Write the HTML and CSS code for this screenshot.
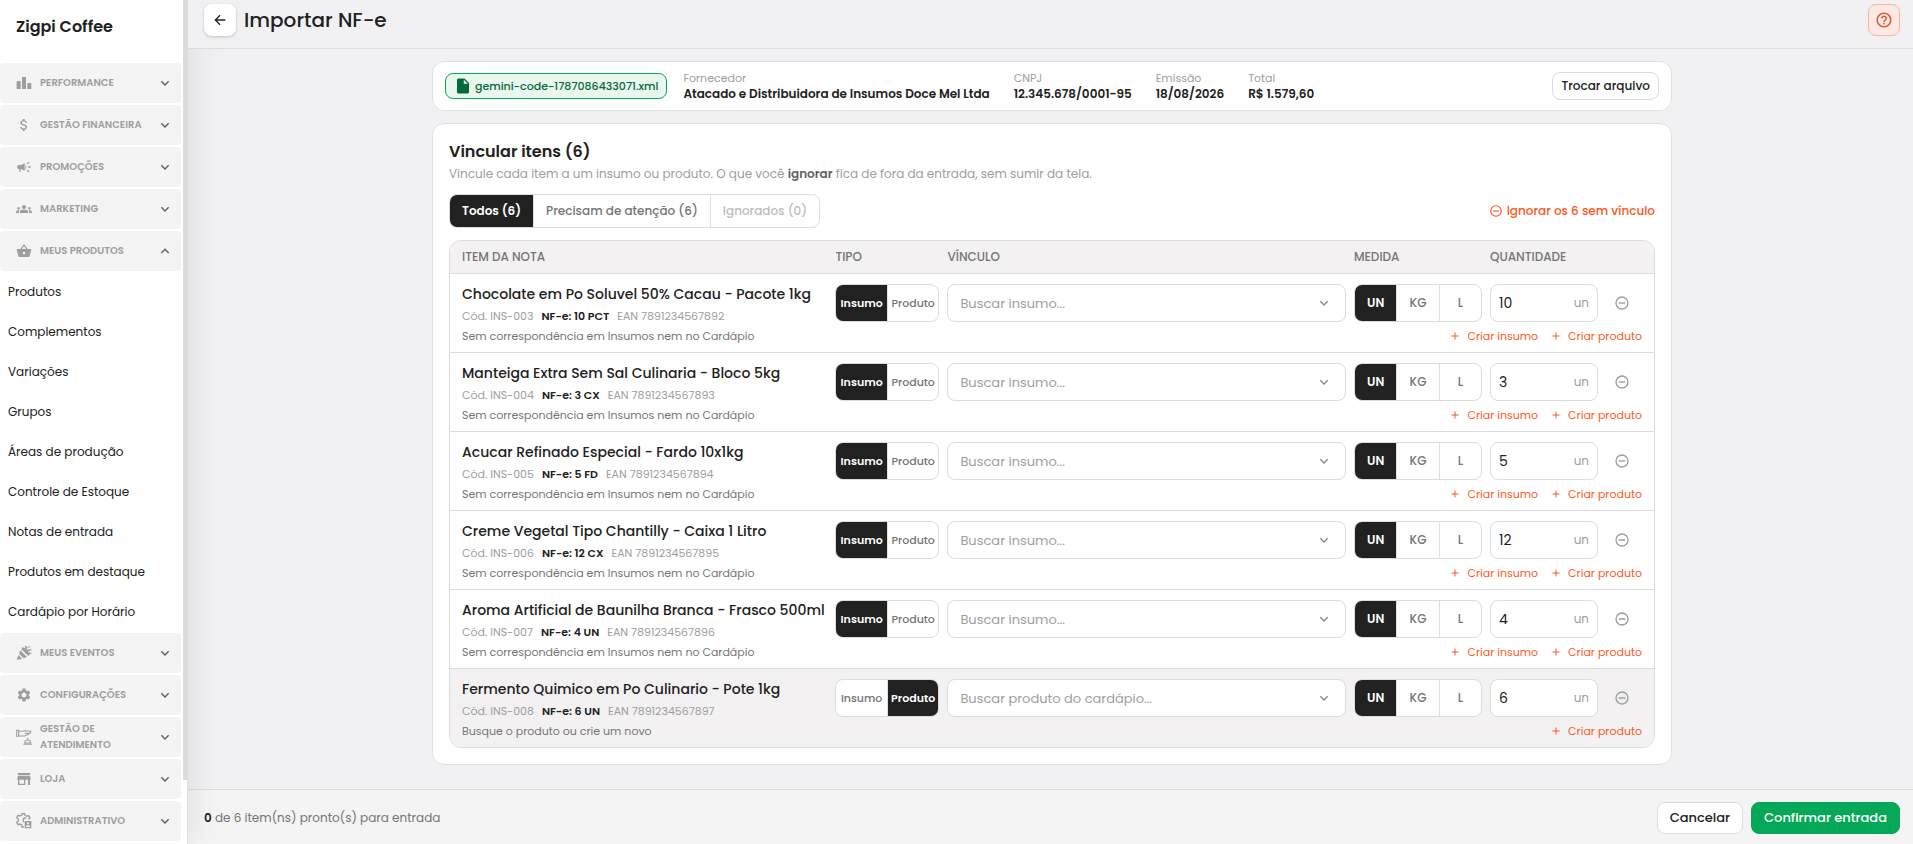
FILE: index.html
```
<!DOCTYPE html>
<html lang="pt-BR">
<head>
    <meta charset="UTF-8">
    <meta name="viewport" content="width=device-width, initial-scale=1.0">
    <title>Importar NF-e</title>
    <link rel="stylesheet" href="styles.css">
</head>
<body>
    <!-- Shared icons -->
    <svg class="sprite" aria-hidden="true">
        <symbol id="i-down" viewBox="0 0 24 24"><path d="M6.500 9.500l5.500 5.500 5.500-5.500" fill="none" stroke="currentColor" stroke-width="2.200"/></symbol>
        <symbol id="i-up" viewBox="0 0 24 24"><path d="M6.500 15l5.500-5.500 5.500 5.500" fill="none" stroke="currentColor" stroke-width="2.200"/></symbol>
        <symbol id="i-minus" viewBox="0 0 24 24"><circle cx="12" cy="12" r="9" fill="none" stroke="currentColor" stroke-width="2"/><path d="M7 11h10v2H7z" fill="currentColor"/></symbol>
        <symbol id="i-plus" viewBox="0 0 24 24"><path d="M19 13h-6v6h-2v-6H5v-2h6V5h2v6h6z" fill="currentColor"/></symbol>
    </svg>

    <aside class="sidebar">
        <h2 class="brand">Zigpi Coffee</h2>
        <nav class="menu">
            <button type="button" class="menu-group">
                <svg class="menu-icon" viewBox="0 0 24 24"><path d="M10 3h4q1 0 1 1v17H9V4q0-1 1-1zM3 9h3q1 0 1 1v11H1V10q0-1 2-1zM18 12h4q1 0 1 1v8h-6v-8q0-1 1-1z" fill="currentColor"/></svg>
                <span>PERFORMANCE</span>
                <svg class="chevron"><use href="#i-down"/></svg>
            </button>
            <button type="button" class="menu-group">
                <svg class="menu-icon" viewBox="0 0 24 24"><path d="M11.8 10.9c-2.27-.59-3-1.2-3-2.15 0-1.09 1.01-1.85 2.7-1.85 1.78 0 2.44.85 2.5 2.1h2.21c-.07-1.72-1.12-3.3-3.21-3.81V3h-3v2.16c-1.94.42-3.5 1.68-3.5 3.61 0 2.31 1.91 3.46 4.7 4.13 2.5.6 3 1.48 3 2.41 0 .69-.49 1.79-2.7 1.79-2.06 0-2.87-.92-2.98-2.1h-2.2c.12 2.19 1.76 3.42 3.68 3.83V21h3v-2.15c1.95-.37 3.5-1.5 3.5-3.55 0-2.84-2.43-3.81-4.7-4.4z" fill="currentColor"/></svg>
                <span>GESTÃO FINANCEIRA</span>
                <svg class="chevron"><use href="#i-down"/></svg>
            </button>
            <button type="button" class="menu-group">
                <svg class="menu-icon" viewBox="0 0 24 24"><path d="M18 11v2h4v-2h-4zm-2 6.61c.96.71 2.21 1.65 3.2 2.39.4-.53.8-1.07 1.2-1.6-.99-.74-2.24-1.68-3.2-2.4-.4.54-.8 1.08-1.2 1.61zM20.400 5.600c-.4-.53-.8-1.070-1.200-1.600-.99.74-2.240 1.680-3.200 2.400.4.53.8 1.070 1.200 1.600.96-.72 2.210-1.650 3.200-2.400zM4 9c-1.100 0-2 .9-2 2v2c0 1.100.9 2 2 2h1v4h2v-4h1l5 3V6L8 9H4zm11.500 3c0-1.330-.58-2.530-1.500-3.350v6.690c.92-.81 1.500-2.010 1.500-3.340z" fill="currentColor"/></svg>
                <span>PROMOÇÕES</span>
                <svg class="chevron"><use href="#i-down"/></svg>
            </button>
            <button type="button" class="menu-group">
                <svg class="menu-icon" viewBox="0 0 24 24"><path d="M12 12.750c1.630 0 3.070.39 4.240.9 1.080.48 1.760 1.560 1.760 2.730V18H6v-1.610c0-1.180.68-2.260 1.760-2.730 1.170-.52 2.610-.91 4.240-.91zM4 13c1.100 0 2-.9 2-2s-.9-2-2-2-2 .9-2 2 .9 2 2 2zm1.130 1.100c-.37-.06-.74-.1-1.130-.1-.99 0-1.930.21-2.780.58C.48 14.900 0 15.620 0 16.430V18h4.500v-1.610c0-.83.23-1.610.63-2.290zM20 13c1.100 0 2-.9 2-2s-.9-2-2-2-2 .9-2 2 .9 2 2 2zm4 3.430c0-.81-.48-1.530-1.220-1.850-.85-.37-1.790-.58-2.780-.58-.39 0-.76.04-1.130.1.400.68.630 1.460.630 2.290V18H24v-1.570zM12 6c1.660 0 3 1.340 3 3s-1.340 3-3 3-3-1.340-3-3 1.340-3 3-3z" fill="currentColor"/></svg>
                <span>MARKETING</span>
                <svg class="chevron"><use href="#i-down"/></svg>
            </button>
            <button type="button" class="menu-group" aria-expanded="true">
                <svg class="menu-icon" viewBox="0 0 24 24"><path d="M17.210 9l-4.380-6.560c-.19-.28-.51-.42-.83-.42-.32 0-.64.14-.83.430L6.790 9H2c-.55 0-1 .45-1 1 0 .09.010.18.040.27l2.540 9.270c.23.84 1 1.460 1.920 1.460h13c.92 0 1.690-.62 1.930-1.460l2.540-9.270L23 10c0-.55-.45-1-1-1h-4.790zM9 9l3-4.400L15 9H9zm3 8c-1.100 0-2-.9-2-2s.9-2 2-2 2 .9 2 2-.9 2-2 2z" fill="currentColor"/></svg>
                <span>MEUS PRODUTOS</span>
                <svg class="chevron"><use href="#i-up"/></svg>
            </button>
            <div class="submenu">
                <a href="#">Produtos</a>
                <a href="#">Complementos</a>
                <a href="#">Variações</a>
                <a href="#">Grupos</a>
                <a href="#">Áreas de produção</a>
                <a href="#">Controle de Estoque</a>
                <a href="#">Notas de entrada</a>
                <a href="#">Produtos em destaque</a>
                <a href="#">Cardápio por Horário</a>
            </div>
            <button type="button" class="menu-group">
                <svg class="menu-icon" viewBox="0 0 24 24"><path d="M1 22l2.500-7 6 6zM4.500 13l2-5 10 10-5 2zM8 6.500l2-3.500 7 4 3.500 7-2 2.500z" fill="currentColor"/><path d="M13 8l4-5M15 10c3-3 5-2 8-3M14 1l1 3M19 12l4 1M19 2l1 2" fill="none" stroke="currentColor" stroke-width="2"/></svg>
                <span>MEUS EVENTOS</span>
                <svg class="chevron"><use href="#i-down"/></svg>
            </button>
            <button type="button" class="menu-group">
                <svg class="menu-icon" viewBox="0 0 24 24"><path d="M19.140 12.940c.04-.3.060-.61.060-.94 0-.32-.02-.64-.07-.94l2.030-1.580c.18-.14.230-.41.120-.61l-1.920-3.320c-.12-.22-.37-.29-.59-.22l-2.390.96c-.5-.38-1.030-.7-1.620-.94l-.36-2.540c-.04-.24-.24-.41-.48-.41h-3.840c-.24 0-.43.17-.47.41l-.36 2.540c-.59.24-1.130.57-1.620.94l-2.390-.96c-.22-.08-.47 0-.59.22L2.740 8.870c-.12.21-.08.47.120.61l2.030 1.580c-.05.3-.09.63-.09.94s.020.64.070.94l-2.030 1.580c-.18.14-.23.41-.12.610l1.920 3.320c.12.22.37.290.590.220l2.390-.96c.5.380 1.030.7 1.620.940l.36 2.540c.05.24.240.410.480.410h3.840c.24 0 .44-.17.470-.41l.36-2.540c.59-.24 1.130-.56 1.620-.94l2.390.96c.22.080.470 0 .590-.22l1.920-3.320c.12-.22.070-.47-.12-.61l-2.010-1.580zM12 15.600c-1.980 0-3.600-1.620-3.600-3.600s1.620-3.600 3.600-3.600 3.600 1.620 3.600 3.600-1.620 3.600-3.600 3.600z" fill="currentColor"/></svg>
                <span>CONFIGURAÇÕES</span>
                <svg class="chevron"><use href="#i-down"/></svg>
            </button>
            <button type="button" class="menu-group">
                <svg class="menu-icon" viewBox="0 0 24 24"><path d="M1 2h3v9H1zM4 3.500h5l4-1 9 1c1 2-1 3-3 3h-6M4 10.500h9l8-4M11 23h13M13 21c0-6 9-6 9 0zM17.500 13v3" fill="none" stroke="currentColor" stroke-width="1.600"/></svg>
                <span>GESTÃO DE ATENDIMENTO</span>
                <svg class="chevron"><use href="#i-down"/></svg>
            </button>
            <button type="button" class="menu-group">
                <svg class="menu-icon" viewBox="0 0 24 24"><path d="M21 3H3v3h18V3zm1 10v-2l-1-4H3l-1 4v2h1v8h11v-8h4v8h3v-8h1zm-10 6H5v-6h7v6z" fill="currentColor"/></svg>
                <span>LOJA</span>
                <svg class="chevron"><use href="#i-down"/></svg>
            </button>
            <button type="button" class="menu-group">
                <svg class="menu-icon" viewBox="0 0 24 24"><path d="M12 21H9l-.500-3-2.500-1.500-3 1-2-3.500 2.500-2v-3L1 7l2-3.500 3 1L8.500 3 9 1h4l.5 2.500L16 5l3-1 2 3.500-2 2" fill="none" stroke="currentColor" stroke-width="2"/><path d="M11 14V9a3 3 0 0 1 4-1" fill="none" stroke="currentColor" stroke-width="2"/><path d="M13 12h10v11H13zM18 14a1.500 1.500 0 1 0 .010 0zM15 20v1h6v-1c-1-2-5-2-6 0z" fill="currentColor" fill-rule="evenodd"/></svg>
                <span>ADMINISTRATIVO</span>
                <svg class="chevron"><use href="#i-down"/></svg>
            </button>
        </nav>
        <span class="scroll-thumb"></span>
    </aside>

    <div class="page">
        <header class="topbar">
            <button type="button" class="back-btn" aria-label="Voltar">
                <svg viewBox="0 0 24 24"><path d="M20 12H5M12 5l-7 7 7 7" fill="none" stroke="currentColor" stroke-width="2"/></svg>
            </button>
            <h1>Importar NF-e</h1>
            <button type="button" class="help-btn" aria-label="Ajuda">
                <svg viewBox="0 0 24 24"><path d="M11 18h2v-2h-2v2zm1-16C6.480 2 2 6.480 2 12s4.480 10 10 10 10-4.480 10-10S17.520 2 12 2zm0 18c-4.410 0-8-3.590-8-8s3.590-8 8-8 8 3.590 8 8-3.590 8-8 8zm0-14c-2.210 0-4 1.790-4 4h2c0-1.100.9-2 2-2s2 .9 2 2c0 2-3 1.750-3 5h2c0-2.250 3-2.500 3-5 0-2.210-1.790-4-4-4z" fill="currentColor"/></svg>
            </button>
        </header>

        <main class="content">
            <section class="card invoice">
                <div class="file-chip">
                    <svg viewBox="0 0 24 24"><path d="M6 2c-1.100 0-2 .9-2 2v16c0 1.100.9 2 2 2h12c1.100 0 2-.9 2-2V8l-6-6H6zm7 7V3.500L18.500 9H13z" fill="currentColor"/></svg>
                    <span>gemini-code-1787086433071.xml</span>
                </div>
                <dl class="invoice-data">
                    <div><dt>Fornecedor</dt><dd>Atacado e Distribuidora de Insumos Doce Mel Ltda</dd></div>
                    <div><dt>CNPJ</dt><dd>12.345.678/0001-95</dd></div>
                    <div><dt>Emissão</dt><dd>18/08/2026</dd></div>
                    <div><dt>Total</dt><dd>R$ 1.579,60</dd></div>
                </dl>
                <button type="button" class="btn btn-small">Trocar arquivo</button>
            </section>

            <section class="card items">
                <h2>Vincular itens (6)</h2>
                <p class="hint">Vincule cada item a um insumo ou produto. O que você <strong>ignorar</strong> fica de fora da entrada, sem sumir da tela.</p>

                <div class="toolbar">
                    <div class="tabs">
                        <button type="button" class="active">Todos (6)</button>
                        <button type="button">Precisam de atenção (6)</button>
                        <button type="button" disabled>Ignorados (0)</button>
                    </div>
                    <button type="button" class="link-btn ignore-all"><svg><use href="#i-minus"/></svg>Ignorar os 6 sem vínculo</button>
                </div>

                <table class="items-table">
                    <thead>
                        <tr>
                            <th>ITEM DA NOTA</th>
                            <th>TIPO</th>
                            <th>VÍNCULO</th>
                            <th>MEDIDA</th>
                            <th>QUANTIDADE</th>
                        </tr>
                    </thead>
                    <tbody id="items"></tbody>
                </table>
            </section>
        </main>

        <footer class="footer">
            <p><strong>0</strong> de 6 item(ns) pronto(s) para entrada</p>
            <button type="button" class="btn">Cancelar</button>
            <button type="button" class="btn btn-confirm">Confirmar entrada</button>
        </footer>
    </div>

    <script src="script.js"></script>
</body>
</html>
```
FILE: styles.css
```
* {
    margin: 0;
    padding: 0;
    box-sizing: border-box;
}

body {
    display: flex;
    height: 100vh;
    overflow: hidden;
    background-color: #f1f1f3;
    color: #212121;
    font-family: Poppins, Inter, sans-serif;
    font-size: 12px;
}

button,
input,
select {
    font: inherit;
    color: inherit;
}

button {
    border: none;
    background: none;
    cursor: pointer;
}

a {
    color: inherit;
    text-decoration: none;
}

.sprite {
    display: none;
}

/* Sidebar */
.sidebar {
    position: relative;
    z-index: 1;
    flex: 0 0 188px;
    background-color: #fff;
    border-right: 1px solid #e0e0e0;
    box-shadow: 0 0 32px rgba(110, 120, 135, 0.18);
}

.brand {
    height: 63px;
    padding: 16px;
    font-size: 16px;
    font-weight: 600;
    line-height: 22px;
}

.menu {
    display: flex;
    flex-direction: column;
    gap: 2px;
    padding-right: 6px;
}

.menu-group {
    display: flex;
    align-items: center;
    gap: 8px;
    height: 40px;
    padding: 0 8px 0 16px;
    border-radius: 4px;
    background-color: #f4f4f4;
    color: #9e9e9e;
    font-size: 10px;
    font-weight: 600;
    line-height: 16px;
    text-align: left;
}

.menu-group span {
    flex: 1;
}

.menu-icon {
    flex: none;
    width: 16px;
    height: 16px;
}

.chevron {
    flex: none;
    width: 16px;
    height: 16px;
    color: #616161;
}

.submenu {
    margin-bottom: -2px;
}

.submenu a {
    display: block;
    padding: 0 0 2px 8px;
    line-height: 38px;
}

.scroll-thumb {
    position: absolute;
    top: 0;
    right: -1px;
    width: 5px;
    height: 780px;
    background-color: #dcdcdc;
}

/* Top bar */
.page {
    display: flex;
    flex: 1;
    flex-direction: column;
    min-width: 0;
}

.topbar {
    position: relative;
    z-index: 2;
    display: flex;
    align-items: center;
    gap: 8px;
    padding: 4px 13px 12px 16px;
    background-color: #f1f1f3;
    border-bottom: 1px solid #dcdcdc;
}

.topbar h1 {
    flex: 1;
    font-size: 20px;
    font-weight: 500;
    line-height: 32px;
}

.back-btn,
.help-btn {
    display: flex;
    align-items: center;
    justify-content: center;
    width: 32px;
    height: 32px;
    border-radius: 8px;
}

.back-btn {
    background-color: #fff;
    box-shadow: 0 1px 3px rgba(0, 0, 0, 0.2);
}

.back-btn svg {
    width: 16px;
    height: 16px;
}

.help-btn {
    border: 1px solid #f9b59c;
    background-color: #fde9e6;
    color: #e0592a;
}

.help-btn svg {
    width: 18px;
    height: 18px;
}

/* Cards */
.content {
    display: flex;
    flex: 1;
    flex-direction: column;
    gap: 12px;
    padding: 12px 13px 24px 16px;
}

.card {
    width: 100%;
    max-width: 1240px;
    margin: 0 auto;
    border: 1px solid #e0e0e0;
    border-radius: 12px;
    background-color: #fff;
}

.invoice {
    display: flex;
    align-items: center;
    gap: 16px;
    padding: 8px 12px;
}

.file-chip {
    display: flex;
    align-items: center;
    gap: 3px;
    height: 26px;
    padding: 0 8px;
    border: 1px solid #05a857;
    border-radius: 8px;
    background-color: #e9f7ef;
    color: #05683a;
    font-size: 11px;
    font-weight: 500;
}

.file-chip svg {
    width: 18px;
    height: 18px;
}

.invoice-data {
    display: flex;
    flex: 1;
    gap: 24px;
    line-height: 16px;
}

.invoice-data dt {
    color: #9e9e9e;
    font-size: 11px;
}

.invoice-data dd {
    font-weight: 600;
}

.btn {
    height: 32px;
    padding: 0 12px;
    border: 1px solid #dcdcdc;
    border-radius: 8px;
    background-color: #fff;
    font-size: 13px;
    font-weight: 500;
}

.btn-small {
    height: 28px;
    padding: 0 8px;
    font-size: 12px;
}

.btn-confirm {
    border-color: #05a857;
    background-color: #05a857;
    color: #fff;
}

.items {
    padding: 16px;
}

.items h2 {
    font-size: 16px;
    font-weight: 600;
    line-height: 24px;
}

.hint {
    color: #9e9e9e;
    line-height: 20px;
}

.hint strong {
    color: #616161;
    font-weight: 600;
}

.toolbar {
    display: flex;
    align-items: center;
    justify-content: space-between;
    margin: 10px 0 12px;
}

.tabs,
.segment {
    display: flex;
    overflow: hidden;
    border: 1px solid #dcdcdc;
    border-radius: 8px;
    background-color: #fff;
}

.tabs button,
.segment button {
    border-left: 1px solid #e0e0e0;
    color: #757575;
    font-weight: 500;
}

.tabs button {
    height: 32px;
    padding: 0 12px;
}

.tabs button:disabled {
    color: #bdbdbd;
}

.tabs button:first-child,
.segment button:first-child {
    border-left: none;
}

.tabs .active,
.segment .active {
    background-color: #212121;
    color: #fff;
    font-weight: 600;
}

.link-btn {
    display: flex;
    align-items: center;
    gap: 6px;
    color: #ff5722;
}

.link-btn svg {
    width: 12px;
    height: 12px;
}

.ignore-all {
    gap: 4px;
    font-weight: 500;
}

.ignore-all svg {
    width: 14px;
    height: 14px;
}

/* Items table */
.items-table {
    display: block;
    overflow: hidden;
    border: 1px solid #dcdcdc;
    border-radius: 12px;
}

.items-table thead,
.items-table tbody {
    display: block;
}

.items-table tr {
    display: grid;
    grid-template-columns: minmax(0, 11fr) 104px minmax(0, 12fr) 128px 108px 36px;
    column-gap: 8px;
    padding: 0 12px;
}

.items-table thead tr {
    background-color: #f3f1f2;
}

.items-table th {
    color: #757575;
    font-weight: 500;
    line-height: 32px;
    text-align: left;
}

.items-table tbody tr {
    padding: 10px 12px 8px;
    border-top: 1px solid #dcdcdc;
}

.items-table .highlight {
    background-color: #f3f1f2;
}

.item-name {
    overflow: hidden;
    font-size: 14px;
    font-weight: 500;
    line-height: 20px;
    white-space: nowrap;
}

.item-meta {
    display: flex;
    gap: 8px;
    margin-top: 3px;
    color: #9e9e9e;
    font-size: 11px;
    line-height: 18px;
}

.item-meta strong {
    color: #212121;
    font-weight: 600;
}

.segment {
    height: 38px;
}

.segment button {
    flex: 1 1 0;
    min-width: 0;
}

.kind button {
    font-size: 11px;
}

.search {
    position: relative;
}

.search select {
    width: 100%;
    height: 38px;
    padding: 0 12px;
    border: 1px solid #dcdcdc;
    border-radius: 8px;
    background-color: #fff;
    color: #9e9e9e;
    font-size: 13px;
    appearance: none;
}

.search svg {
    position: absolute;
    top: 11px;
    right: 14px;
    width: 16px;
    height: 16px;
    color: #8a8a8a;
    pointer-events: none;
}

.quantity {
    display: flex;
    align-items: center;
    height: 38px;
    padding: 0 8px;
    border: 1px solid #dcdcdc;
    border-radius: 8px;
    background-color: #fff;
    color: #9e9e9e;
}

.quantity input {
    flex: 1;
    min-width: 0;
    border: none;
    outline: none;
    background: none;
    color: #212121;
    font-size: 14px;
}

.ignore-btn {
    display: flex;
    align-items: center;
    justify-content: center;
    width: 32px;
    height: 38px;
    color: #9e9e9e;
}

.ignore-btn svg {
    width: 16px;
    height: 16px;
}

.item-note {
    display: flex;
    grid-column: 1 / -1;
    gap: 12px;
    margin-top: 3px;
    color: #757575;
    font-size: 11px;
    line-height: 16px;
}

.item-note span {
    flex: 1;
}

/* Footer */
.footer {
    display: flex;
    align-items: center;
    gap: 8px;
    padding: 12px 13px 10px 16px;
    border-top: 1px solid #dcdcdc;
    background-color: #f4f4f4;
}

.footer p {
    flex: 1;
    color: #757575;
}

.footer strong {
    color: #212121;
    font-weight: 600;
}
```
FILE: script.js
```
const items = [
    { name: 'Chocolate em Po Soluvel 50% Cacau - Pacote 1kg', code: 'INS-003', nfe: '10 PCT', ean: '7891234567892', qty: 10, type: 'insumo' },
    { name: 'Manteiga Extra Sem Sal Culinaria - Bloco 5kg', code: 'INS-004', nfe: '3 CX', ean: '7891234567893', qty: 3, type: 'insumo' },
    { name: 'Acucar Refinado Especial - Fardo 10x1kg', code: 'INS-005', nfe: '5 FD', ean: '7891234567894', qty: 5, type: 'insumo' },
    { name: 'Creme Vegetal Tipo Chantilly - Caixa 1 Litro', code: 'INS-006', nfe: '12 CX', ean: '7891234567895', qty: 12, type: 'insumo' },
    { name: 'Aroma Artificial de Baunilha Branca - Frasco 500ml', code: 'INS-007', nfe: '4 UN', ean: '7891234567896', qty: 4, type: 'insumo' },
    { name: 'Fermento Quimico em Po Culinario - Pote 1kg', code: 'INS-008', nfe: '6 UN', ean: '7891234567897', qty: 6, type: 'produto' }
];

function linkButton(text) {
    return `<button type="button" class="link-btn"><svg><use href="#i-plus"/></svg>${text}</button>`;
}

// Build one table row per invoice item
document.getElementById('items').innerHTML = items.map(item => {
    const insumo = item.type === 'insumo';
    return `
        <tr class="${insumo ? '' : 'highlight'}">
            <td>
                <p class="item-name">${item.name}</p>
                <p class="item-meta"><span>Cód. ${item.code}</span><strong>NF-e: ${item.nfe}</strong><span>EAN ${item.ean}</span></p>
            </td>
            <td>
                <div class="segment kind">
                    <button type="button" class="${insumo ? 'active' : ''}">Insumo</button>
                    <button type="button" class="${insumo ? '' : 'active'}">Produto</button>
                </div>
            </td>
            <td class="search">
                <select aria-label="Vínculo">
                    <option>${insumo ? 'Buscar insumo...' : 'Buscar produto do cardápio...'}</option>
                </select>
                <svg><use href="#i-down"/></svg>
            </td>
            <td>
                <div class="segment">
                    <button type="button" class="active">UN</button>
                    <button type="button">KG</button>
                    <button type="button">L</button>
                </div>
            </td>
            <td>
                <label class="quantity"><input type="text" aria-label="Quantidade" value="${item.qty}">un</label>
            </td>
            <td>
                <button type="button" class="ignore-btn" aria-label="Ignorar item"><svg><use href="#i-minus"/></svg></button>
            </td>
            <td class="item-note">
                <span>${insumo ? 'Sem correspondência em Insumos nem no Cardápio' : 'Busque o produto ou crie um novo'}</span>
                ${insumo ? linkButton('Criar insumo') : ''}
                ${linkButton('Criar produto')}
            </td>
        </tr>`;
}).join('');
```
